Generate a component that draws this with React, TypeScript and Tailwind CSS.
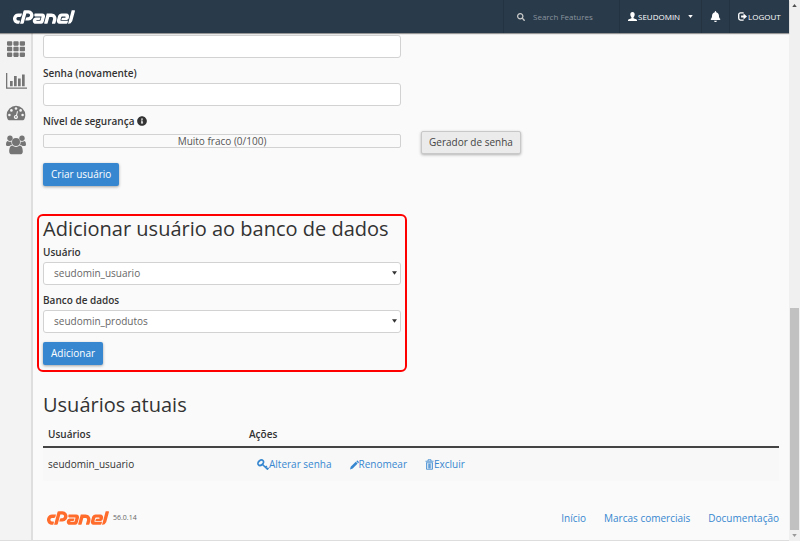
import type { ReactNode } from "react";
import { FaBell, FaInfoCircle, FaSearch, FaTh } from "react-icons/fa";
import { SiCpanel } from "react-icons/si";

const BarChartIcon = () => (
	<svg viewBox="0 0 21 16" className="w-[21px] h-4" fill="currentColor" aria-hidden="true">
		<path d="M0 0h1.3v14.4H21v1.3H0z" />
		<path d="M4 8h2.7v5.2H4zM8 3h2.7v10.2H8zM12 5.6h2.7v7.6H12zM16 1.6h2.7v11.6H16z" />
	</svg>
);

const GaugeIcon = () => (
	<svg viewBox="0 0 20 16" className="w-5 h-4" aria-hidden="true">
		<path d="M10 .8a9.300 9.300 0 0 0-9.300 9.300c0 1.800.5 3.400 1.300 4.700.2.300.5.500.9.500h14.200c.4 0 .7-.2.900-.5.8-1.300 1.300-2.900 1.300-4.700A9.300 9.300 0 0 0 10 .8z" fill="currentColor" />
		<g fill="#f3f3f3">
			<circle cx="3.400" cy="10" r="1.300" />
			<circle cx="5.400" cy="5.400" r="1.300" />
			<circle cx="10" cy="3.500" r="1.300" />
			<circle cx="14.600" cy="5.400" r="1.300" />
			<circle cx="16.600" cy="10" r="1.300" />
			<path d="M11 6.100l1 .3-1 3.800a2.100 2.100 0 1 1-1-.3z" />
		</g>
		<circle cx="9.900" cy="11.900" r=".8" fill="currentColor" />
	</svg>
);

const GroupIcon = () => (
	<svg viewBox="0 0 20 20" className="w-5 h-5" fill="currentColor" aria-hidden="true">
		<circle cx="4" cy="3.300" r="2.700" />
		<circle cx="16" cy="3.300" r="2.700" />
		<path d="M5.400 7.200C5.400 6.900 5.500 6.600 5.500 6.400 4 7 2.600 6.700 1.300 5.900.3 6.600 0 8.300 0 9.500c0 1 .8 1.600 1.800 1.600h1.600c.7-.8 1.500-1.200 2.600-1.300-.4-.8-.6-1.700-.6-2.600zM14.600 7.200c0-.3-.1-.6-.1-.8 1.500.6 2.900.3 4.200-.5 1 .7 1.300 2.400 1.300 3.600 0 1-.8 1.600-1.800 1.600h-1.600c-.7-.8-1.500-1.200-2.600-1.300.4-.8.6-1.700.6-2.600z" />
		<circle cx="10" cy="7" r="4" />
		<path d="M6.200 10.600c2.300 1.800 5.300 1.800 7.600 0 2.300.2 3 3.500 3 5.800 0 1.900-1.200 2.900-2.900 2.900H6.100c-1.700 0-2.900-1-2.900-2.900 0-2.300.7-5.600 3-5.800z" />
	</svg>
);

const UserIcon = () => (
	<svg viewBox="0 0 16 16" className="w-[9px] h-[9px]" fill="currentColor" aria-hidden="true">
		<path d="M8 0C5.4 0 4.1 1.8 4.1 4.3c0 2 .8 4 2 5v1.2c0 .5-.3.8-.8 1L1.4 13C.5 13.400 0 14 0 14.800V16h16v-1.200c0-.8-.5-1.400-1.400-1.800l-3.900-1.500c-.5-.2-.8-.5-.8-1V9.300c1.200-1 2-3 2-5C11.900 1.800 10.600 0 8 0z" />
	</svg>
);

const LogoutIcon = () => (
	<svg viewBox="0 0 16 16" className="w-[9px] h-[9px]" fill="none" aria-hidden="true">
		<path d="M10 1.500H4.500a3.200 3.200 0 0 0-3.200 3.200v6.600a3.200 3.200 0 0 0 3.200 3.200H10" stroke="currentColor" strokeWidth="2.400" />
		<path d="M5.500 6.200h4.300V2.800L16 8l-6.200 5.200V9.800H5.500z" fill="currentColor" />
	</svg>
);

const KeyIcon = () => (
	<svg viewBox="0 0 24 24" className="w-3 h-3" fill="none" stroke="currentColor" aria-hidden="true">
		<ellipse cx="7.500" cy="7.500" rx="6.200" ry="4.600" strokeWidth="3.400" transform="rotate(-40 7.500 7.500)" />
		<path d="M10 10l11.500 11M16.500 17.500l3-3.500M20 21l3-3.500" strokeWidth="3.400" />
	</svg>
);

const PencilIcon = () => (
	<svg viewBox="0 0 20 20" className="w-[9px] h-[10px]" fill="currentColor" aria-hidden="true">
		<path d="M0 20l1.500-6L12.800 2.700l4.200 4.200L6 18zM14 1.600L15.200.5c.6-.6 1.400-.6 2 0L19.400 2.800c.6.6.6 1.400 0 2l-1.200 1.100z" />
	</svg>
);

const TrashIcon = () => (
	<svg viewBox="0 0 18 22" className="w-[9px] h-[11px]" fill="none" stroke="currentColor" aria-hidden="true">
		<path d="M1 4.500h16M6 4V1.500h6V4M2.800 7.500h12.400M3 7v13.500h12V7M6.500 9v10M9 9v10M11.500 9v10" strokeWidth="1.600" />
	</svg>
);

const Caret = ({ className }: { className: string }) => (
	<svg viewBox="0 0 6 4" className={className} fill="currentColor" aria-hidden="true">
		<path d="M0 0h6L3 4z" />
	</svg>
);

const label = "block mt-2 mb-[3px] leading-[14px] font-semibold text-[#333]";
const field = "block w-full h-[23px] rounded-[3px] border border-[#d2d2d2] bg-white";
const primary = "block h-[23px] px-2 rounded-[2px] bg-[#3787d0] text-white shadow-[0_1px_3px_rgba(0,0,0,0.35)]";

const SelectField = ({ id, title, value }: { id: string; title: string; value: string }) => (
	<div>
		<label htmlFor={id} className={label}>{title}</label>
		<div className="relative">
			<select id={id} className={`${field} appearance-none pl-[10px] text-[#666]`}>
				<option>{value}</option>
			</select>
			<Caret className="absolute right-[4px] top-[9px] w-[5px] h-1 text-[#333] pointer-events-none" />
		</div>
	</div>
);

const Action = ({ icon, children }: { icon: ReactNode; children: ReactNode }) => (
	<a href="#" className="flex items-center text-[#3787d0]">
		{icon}
		{children}
	</a>
);

const Header = () => (
	<header className="relative flex h-[33px] bg-[#293a4a] text-white shadow-[0_1px_1px_rgba(0,0,0,0.4)]">
		<a href="#" aria-label="cPanel" className="flex items-center pl-[13px]">
			<SiCpanel className="w-[62px] h-[62px] -my-4" />
		</a>
		<div className="flex ml-auto text-[8px]">
			<div className="flex items-center w-[116px] pl-[13px] gap-2 border-l border-[#243341]">
				<FaSearch className="size-2 text-[#ccc]" />
				<input
					aria-label="Search Features"
					placeholder="Search Features"
					className="w-20 bg-transparent placeholder:text-[#8a949e] outline-none"
				/>
			</div>
			<button className="flex items-center w-[82px] pl-2 border-l border-[#243341]">
				<UserIcon />
				<span className="ml-px">SEUDOMIN</span>
				<Caret className="w-[5px] h-[3px] ml-auto mr-2" />
			</button>
			<button aria-label="Notificações" className="flex items-center justify-center w-7 border-l border-[#243341]">
				<FaBell className="size-[11px]" />
			</button>
			<a href="#" className="flex items-center w-[60px] pl-2 gap-px border-l border-[#243341]">
				<LogoutIcon />
				LOGOUT
			</a>
		</div>
	</header>
);

const Sidebar = () => (
	<nav className="flex flex-col w-[33px] shrink-0 pt-[7px] pl-[6px] bg-[#f3f3f3] border-r-2 border-[#dedede] text-[#757575]">
		<a href="#" aria-label="Início" className="mb-[15px]"><FaTh className="w-5 h-[18px]" /></a>
		<a href="#" aria-label="Estatísticas" className="mb-4"><BarChartIcon /></a>
		<a href="#" aria-label="Painel" className="mb-[14px]"><GaugeIcon /></a>
		<a href="#" aria-label="Usuários"><GroupIcon /></a>
	</nav>
);

const Scrollbar = () => (
	<div className="flex flex-col items-center w-[11px] shrink-0 bg-[#f0f0f0]" aria-hidden="true">
		<Caret className="w-[5px] h-[3px] mt-1 mb-auto rotate-180 text-[#505050]" />
		<div className="w-[9px] h-[41%] bg-[#c1c1c1]" />
		<Caret className="w-[5px] h-[3px] my-[4px] text-[#999]" />
	</div>
);

export default function App() {
	return (
		<div className="flex min-h-screen font-['Open_Sans',sans-serif] text-[10px] text-[#333] bg-[#fafafa]">
			<div className="flex flex-col flex-1 min-w-0">
				<Header />
				<div className="flex flex-1 border-b border-[#ddd]">
					<Sidebar />
					<main className="flex-1 min-w-0 pt-[2px] px-[10px]">
						<form className="grid grid-cols-2 gap-x-5">
							<div>
								<input type="password" aria-label="Senha" className={field} />
								<label htmlFor="again" className={label}>Senha (novamente)</label>
								<input id="again" type="password" className={field} />
								<div className={label}>
									Nível de segurança <FaInfoCircle className="inline size-[10px] -mt-[3px]" />
								</div>
								<div className="h-[14px] mt-[6px] border border-[#d2d2d2] rounded-[2px] text-center leading-3 text-[#555]">
									Muito fraco (0/100)
								</div>
								<button type="button" className={`${primary} mt-[15px]`}>Criar usuário</button>
							</div>
							<button
								type="button"
								className="self-end justify-self-start h-[23px] mb-8 px-[7px] border border-[#c8c8c8] rounded-[2px] bg-[#ebebeb] text-[#444] shadow-[0_1px_3px_rgba(0,0,0,0.3)]"
							>
								Gerador de senha
							</button>
						</form>

						<div className="grid grid-cols-2 gap-x-5 mt-7">
							<form className="-mx-[6px] px-1 pt-px pb-[5px] border-2 border-[#f00] rounded-md">
								<h2 className="-mb-1 text-[20px] leading-6">Adicionar usuário ao banco de dados</h2>
								<SelectField id="user" title="Usuário" value="seudomin_usuario" />
								<SelectField id="database" title="Banco de dados" value="seudomin_produtos" />
								<button type="button" className={`${primary} mt-[9px]`}>Adicionar</button>
							</form>
						</div>

						<h2 className="mt-[21px] text-[20px] leading-6">Usuários atuais</h2>
						<table className="w-full mt-[6px] text-left">
							<thead>
								<tr className="h-6 border-b-2 border-[#444]">
									<th className="w-[201px] pl-[5px] font-semibold">Usuários</th>
									<th className="pl-[5px] font-semibold">Ações</th>
								</tr>
							</thead>
							<tbody>
								<tr className="h-[34px] bg-[#f8f8f8]">
									<td className="pl-[5px]">seudomin_usuario</td>
									<td className="pl-[13px]">
										<div className="flex gap-[18px]">
											<Action icon={<KeyIcon />}>Alterar senha</Action>
											<Action icon={<PencilIcon />}>Renomear</Action>
											<Action icon={<TrashIcon />}>Excluir</Action>
										</div>
									</td>
								</tr>
							</tbody>
						</table>

						<footer className="flex items-center h-6 mt-[25px]">
							<SiCpanel className="w-[62px] h-[62px] ml-1 text-[#ff6c2c]" />
							<span className="ml-1 text-[7px] text-[#666]">56.0.14</span>
							<nav className="flex gap-[18px] ml-auto text-[#3787d0]">
								<a href="#">Início</a>
								<a href="#">Marcas comerciais</a>
								<a href="#">Documentação</a>
							</nav>
						</footer>
					</main>
				</div>
			</div>
			<Scrollbar />
		</div>
	);
}
